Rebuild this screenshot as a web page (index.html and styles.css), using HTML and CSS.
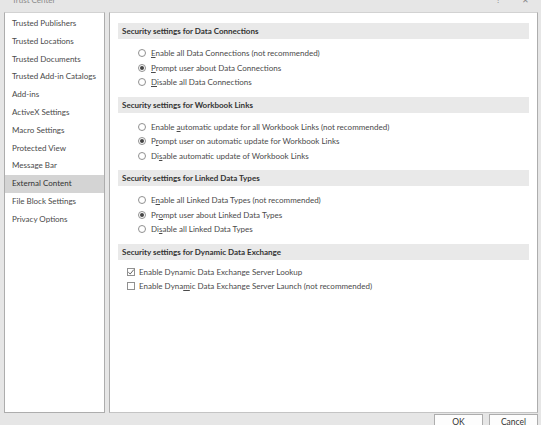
FILE: index.html
```html
<!DOCTYPE html>
<html lang="en">
<head>
<meta charset="utf-8">
<title>Trust Center</title>
<link rel="stylesheet" href="styles.css">
</head>
<body>
<div class="window">
  <div class="titlebar">
    <span class="title">Trust Center</span>
    <span class="tb-btns"><span class="tb-help">?</span><span class="tb-close">✕</span></span>
  </div>
  <div class="main">
    <nav class="nav">
      <div class="nav-item">Trusted Publishers</div>
      <div class="nav-item">Trusted Locations</div>
      <div class="nav-item">Trusted Documents</div>
      <div class="nav-item">Trusted Add-in Catalogs</div>
      <div class="nav-item">Add-ins</div>
      <div class="nav-item">ActiveX Settings</div>
      <div class="nav-item">Macro Settings</div>
      <div class="nav-item">Protected View</div>
      <div class="nav-item">Message Bar</div>
      <div class="nav-item active">External Content</div>
      <div class="nav-item">File Block Settings</div>
      <div class="nav-item">Privacy Options</div>
    </nav>
    <section class="content">
      <div class="group">
        <div class="group-head">Security settings for Data Connections</div>
        <div class="options">
          <div class="opt radio-opt"><span class="radio"></span><span><u>E</u>nable all Data Connections (not recommended)</span></div>
          <div class="opt radio-opt"><span class="radio on"></span><span><u>P</u>rompt user about Data Connections</span></div>
          <div class="opt radio-opt"><span class="radio"></span><span><u>D</u>isable all Data Connections</span></div>
        </div>
      </div>
      <div class="group">
        <div class="group-head">Security settings for Workbook Links</div>
        <div class="options">
          <div class="opt radio-opt"><span class="radio"></span><span>Enable <u>a</u>utomatic update for all Workbook Links (not recommended)</span></div>
          <div class="opt radio-opt"><span class="radio on"></span><span>P<u>r</u>ompt user on automatic update for Workbook Links</span></div>
          <div class="opt radio-opt"><span class="radio"></span><span>Di<u>s</u>able automatic update of Workbook Links</span></div>
        </div>
      </div>
      <div class="group">
        <div class="group-head">Security settings for Linked Data Types</div>
        <div class="options">
          <div class="opt radio-opt"><span class="radio"></span><span>E<u>n</u>able all Linked Data Types (not recommended)</span></div>
          <div class="opt radio-opt"><span class="radio on"></span><span>Pr<u>o</u>mpt user about Linked Data Types</span></div>
          <div class="opt radio-opt"><span class="radio"></span><span>Di<u>s</u>able all Linked Data Types</span></div>
        </div>
      </div>
      <div class="group">
        <div class="group-head">Security settings for Dynamic Data Exchange</div>
        <div class="options checks">
          <div class="opt check-opt"><span class="check on"><svg viewBox="0 0 8 8" width="8" height="8"><path d="M1.3 4.2 L3.2 6 L6.8 1.6" fill="none" stroke="#555" stroke-width="0.9"/></svg></span><span>Enable Dynamic Data Exchange Server Lookup</span></div>
          <div class="opt check-opt"><span class="check"></span><span>Enable Dyna<u>m</u>ic Data Exchange Server Launch (not recommended)</span></div>
        </div>
      </div>
    </section>
  </div>
  <div class="footer">
    <button class="btn">OK</button>
    <button class="btn">Cancel</button>
  </div>
</div>
</body>
</html>
```
FILE: styles.css
```css
html, body {
  margin: 0;
  padding: 0;
}
body {
  width: 541px;
  height: 425px;
  overflow: hidden;
  background: #e6e6e6;
  font-family: "Lato", "Noto Sans", sans-serif;
  font-size: 8px;
  color: #4a4a4a;
}
.window {
  display: flex;
  flex-direction: column;
  width: 541px;
  height: 425px;
  overflow: hidden;
}
.titlebar {
  flex: none;
  height: 12px;
  display: flex;
  justify-content: space-between;
  align-items: flex-start;
  overflow: hidden;
  padding: 0 12px;
  color: #8a8a8a;
}
.title {
  margin-top: -6px;
  line-height: 12px;
}
.tb-btns {
  display: flex;
  gap: 22px;
  margin-top: -6px;
  line-height: 12px;
}
.main {
  flex: none;
  display: flex;
  gap: 4px;
  height: 401px;
  padding: 0 3px 0 4px;
}
.nav {
  width: 101px;
  box-sizing: border-box;
  background: #fff;
  border: 1px solid #adadad;
  border-top-color: #d2d2d2;
  display: flex;
  flex-direction: column;
  padding-top: 2px;
}
.nav-item {
  height: 17.8px;
  line-height: 17.8px;
  padding-left: 7px;
  white-space: nowrap;
  color: #4a4a4a;
}
.nav-item.active {
  background: #d4d4d4;
  color: #333;
}
.content {
  flex: 1;
  box-sizing: border-box;
  background: #fff;
  border: 1px solid #adadad;
  border-top-color: #d2d2d2;
  border-bottom-color: #c4c4c4;
  padding: 10px 8px 0 8px;
}
.group-head {
  height: 16px;
  line-height: 16px;
  background: #e9e9e9;
  padding-left: 4px;
  font-weight: bold;
  color: #333;
}
.options {
  padding: 7px 0 7px 0;
}
.options.checks {
  padding-top: 5px;
}
.opt {
  height: 14.5px;
  display: flex;
  align-items: center;
  white-space: nowrap;
}
.radio-opt {
  padding-left: 20px;
  gap: 5px;
}
.check-opt {
  padding-left: 9px;
  gap: 4px;
}
.radio {
  width: 8px;
  height: 8px;
  box-sizing: border-box;
  border: 1px solid #909090;
  border-radius: 50%;
  background: #fff;
  display: flex;
  align-items: center;
  justify-content: center;
  flex: none;
}
.radio.on::after {
  content: "";
  width: 4px;
  height: 4px;
  border-radius: 50%;
  background: #444;
}
.check {
  width: 8px;
  height: 8px;
  box-sizing: border-box;
  border: 1px solid #909090;
  background: #fff;
  display: flex;
  align-items: center;
  justify-content: center;
  flex: none;
  overflow: visible;
}
.check svg {
  display: block;
  flex: none;
}
u {
  text-decoration-thickness: 1px;
  text-underline-offset: 1px;
}
.footer {
  flex: none;
  display: flex;
  justify-content: flex-end;
  gap: 6px;
  padding: 1px 3px 0 0;
}
.btn {
  flex: none;
  width: 49px;
  height: 24px;
  box-sizing: border-box;
  background: #fdfdfd;
  border: 1px solid #adadad;
  font-family: "Lato", "Noto Sans", sans-serif;
  font-size: 8.5px;
  color: #333;
  padding: 0 0 8px 0;
  line-height: 14px;
}
```
